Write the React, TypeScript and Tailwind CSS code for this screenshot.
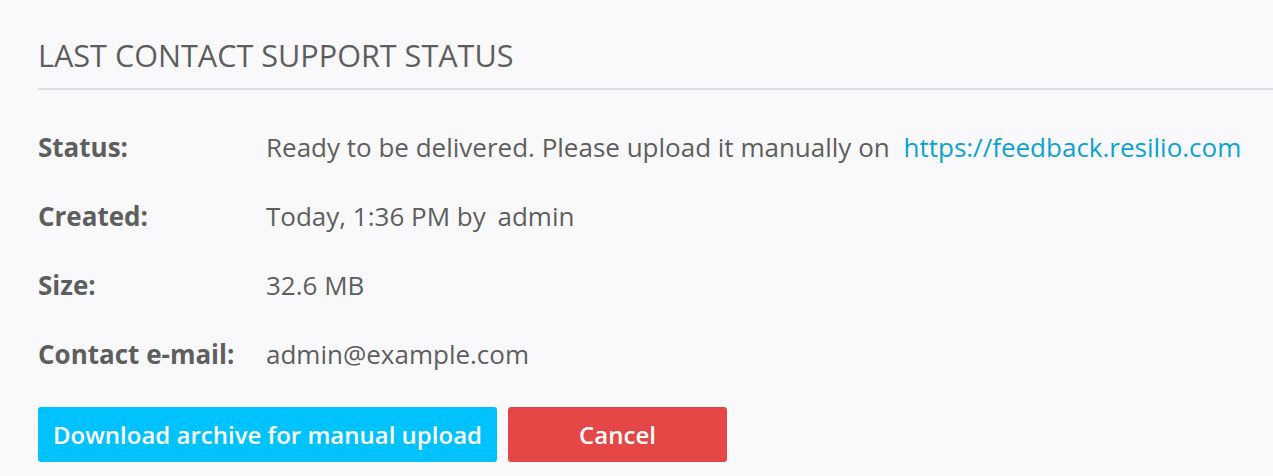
import React from 'react';

const rows: { label: string; value: React.ReactNode }[] = [
  {
    label: 'Status:',
    value: (
      <>
        Ready to be delivered. Please upload it manually on{' '}
        <a href="#" className="ml-[7px] text-[#0aa3d3]">https://feedback.resilio.com</a>
      </>
    ),
  },
  { label: 'Created:', value: <>Today, 1:36 PM by <span className="ml-[5px]">admin</span></> },
  { label: 'Size:', value: '32.6 MB' },
  { label: 'Contact e-mail:', value: 'admin@example.com' },
];

const App: React.FC = () => {
  return (
    <div className="min-h-screen w-full bg-[#f9f9fb] font-['Open_Sans',sans-serif] text-[#5e5e5e]">
      <div className="pl-[38px] pt-[35px]">
        {/* Header */}
        <h1 className="text-[30.6px] leading-[40px] font-normal">LAST CONTACT SUPPORT STATUS</h1>
        <div className="mt-[13px] h-[2px] bg-[#dddee2]" />

        {/* Details */}
        <div className="mt-[39px] flex flex-col gap-[32px]">
          {rows.map((r) => (
            <div key={r.label} className="flex items-center text-[26px] leading-[37px]">
              <div className="w-[228px] shrink-0 font-bold">{r.label}</div>
              <div>{r.value}</div>
            </div>
          ))}
        </div>

        {/* Actions */}
        <div className="mt-[34px] flex gap-[11px]">
          <button className="h-[55px] w-[459px] rounded-[3px] bg-[#00c2ff] text-[24px] font-semibold text-white">
            Download archive for manual upload
          </button>
          <button className="h-[55px] w-[219px] rounded-[3px] bg-[#e54646] text-[24px] font-semibold text-white">
            Cancel
          </button>
        </div>
      </div>
    </div>
  );
};

export default App;
